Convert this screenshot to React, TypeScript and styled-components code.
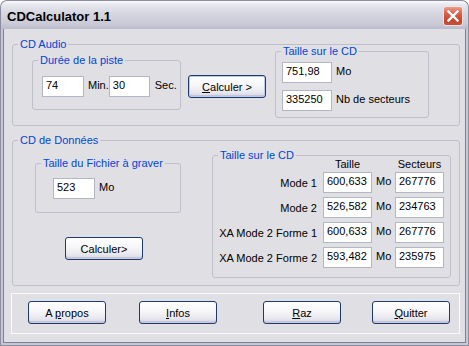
import React from 'react';
import styled, { createGlobalStyle } from 'styled-components';

const GlobalStyle = createGlobalStyle`
  html, body {
    margin: 0;
    padding: 0;
    background: #ffffff;
  }
  body {
    font-family: "Liberation Sans", Arial, sans-serif;
    font-size: 11px;
    color: #000;
  }
`;

const Window = styled.div`
  width: 469px;
  height: 346px;
  display: flex;
  flex-direction: column;
`;

const TitleBar = styled.div`
  flex: none;
  height: 29px;
  box-sizing: border-box;
  display: flex;
  align-items: center;
  justify-content: space-between;
  padding: 2px 5px 0 6px;
  border: 1px solid #8c8ca0;
  border-bottom: none;
  border-radius: 7px 7px 0 0;
  background: linear-gradient(
    180deg,
    #fbfbfd 0%,
    #e6e6ee 14%,
    #d6d6e1 45%,
    #cbcbd8 80%,
    #bbbbcb 100%
  );
`;

const Title = styled.span`
  font-family: "Liberation Sans", Arial, sans-serif;
  font-weight: bold;
  font-size: 13px;
  line-height: 15px;
  color: #000;
`;

const CloseBtn = styled.div`
  width: 20px;
  height: 20px;
  box-sizing: border-box;
  border: 1px solid #f4e4e0;
  border-radius: 3px;
  background: linear-gradient(180deg, #e9a08e 0%, #d9604a 35%, #c9432d 75%, #c5503d 100%);
  display: flex;
  align-items: center;
  justify-content: center;
`;

const Frame = styled.div`
  flex: 1;
  display: flex;
  border: 1px solid #8d8da0;
  border-top: none;
  padding: 0 2px 2px;
  background: #c7c7d5;
`;

const Panel = styled.div`
  flex: 1;
  display: flex;
  flex-direction: column;
  align-items: flex-start;
  background: #e0dfe3;
  border: 1px solid #7e7e94;
  border-top: none;
  padding: 9px 0 0 8px;
`;

const Group = styled.fieldset<{ $w: number; $h: number; $m?: string }>`
  margin: ${(p) => p.$m ?? '0'};
  padding: 0;
  min-width: 0;
  box-sizing: border-box;
  width: ${(p) => p.$w}px;
  height: ${(p) => p.$h}px;
  border: 1px solid #bfbfc9;
  border-radius: 3px;
  flex: none;
`;

const Legend = styled.legend`
  margin-left: 5px;
  padding: 0 2px;
  color: #0046d5;
  font-size: 11px;
  line-height: 13px;
`;

const Row = styled.div`
  display: flex;
  align-items: flex-start;
`;

const Column = styled.div<{ $ml: number }>`
  display: flex;
  flex-direction: column;
  align-items: flex-start;
  margin-left: ${(p) => p.$ml}px;
`;

const Inner = styled.div<{ $pad: string }>`
  padding: ${(p) => p.$pad};
  display: flex;
  flex-direction: column;
  gap: 7px;
`;

const InputLine = styled.div`
  display: flex;
  align-items: center;
`;

const Field = styled.input.attrs(() => ({
  type: 'text',
  readOnly: true,
}))<{ $w: number }>`
  width: ${(p) => p.$w}px;
  height: 21px;
  box-sizing: border-box;
  margin: 0;
  padding: 0 0 3px 3px;
  border: 1px solid #b3b6c4;
  background: #fff;
  color: #000;
  font-family: "Liberation Sans", Arial, sans-serif;
  font-size: 11px;
  outline: none;
`;

const Unit = styled.span<{ $ml?: number }>`
  margin-left: ${(p) => p.$ml ?? 4}px;
  padding-bottom: 2px;
  line-height: 13px;
  white-space: nowrap;
`;

const Button = styled.button<{ $ml?: number; $mt?: number; $default?: boolean }>`
  flex: none;
  width: 78px;
  height: 23px;
  margin: ${(p) => p.$mt ?? 0}px 0 0 ${(p) => p.$ml ?? 0}px;
  padding: 0;
  border: 1px solid #1d3b6e;
  border-radius: 3px;
  background: linear-gradient(180deg, #ffffff 0%, #f6f6f9 45%, #e6e6ee 80%, #d2d1df 100%);
  box-shadow: ${(p) =>
    p.$default
      ? 'inset 0 0 0 1px #b8cbec, inset 0 -2px 0 #c6c5d8'
      : 'inset 0 1px 0 #ffffff, inset 0 -2px 0 #c9c8d9'};
  font-family: "Liberation Sans", Arial, sans-serif;
  font-size: 11px;
  color: #000;
  cursor: default;
`;

const Table = styled.div`
  margin-top: -4px;
  display: flex;
  flex-direction: column;
`;

const TableHead = styled.div`
  display: grid;
  grid-template-columns: 110px 49px 23px 49px;
  height: 13px;
  line-height: 13px;
  margin-bottom: 1px;
`;

const TableBody = styled.div`
  display: flex;
  flex-direction: column;
  gap: 4px;
`;

const TableRow = styled.div`
  display: grid;
  grid-template-columns: 110px 49px 23px 49px;
  align-items: center;
`;

const HeadCell = styled.span<{ $col: number }>`
  grid-column: ${(p) => p.$col};
  text-align: center;
`;

const RowLabel = styled.span`
  text-align: right;
  padding-right: 6px;
  white-space: nowrap;
`;

const ButtonBar = styled.div`
  margin: 7px 0 0 -1px;
  width: 449px;
  height: 41px;
  box-sizing: border-box;
  border: 1px solid #fbfbfd;
  display: flex;
  align-items: flex-start;
  padding: 7px 0 0 16px;
`;

const modes = [
  { label: 'Mode 1', size: '600,633', sectors: '267776' },
  { label: 'Mode 2', size: '526,582', sectors: '234763' },
  { label: 'XA Mode 2 Forme 1', size: '600,633', sectors: '267776' },
  { label: 'XA Mode 2 Forme 2', size: '593,482', sectors: '235975' },
];

const App: React.FC = () => {
  return (
    <>
      <GlobalStyle />
      <Window>
        <TitleBar>
          <Title>CDCalculator 1.1</Title>
          <CloseBtn>
            <svg width="12" height="12" viewBox="0 0 12 12">
              <path d="M1.5 1.5 L10.5 10.5 M10.5 1.5 L1.5 10.5" stroke="#fff" strokeWidth="2.4" strokeLinecap="square" />
            </svg>
          </CloseBtn>
        </TitleBar>
        <Frame>
          <Panel>
            <Group $w={448} $h={88}>
              <Legend>CD Audio</Legend>
              <Row>
                <Group $w={149} $h={56} $m="3px 0 0 19px">
                  <Legend>Durée de la piste</Legend>
                  <Inner $pad="9px 0 0 9px">
                    <InputLine>
                      <Field $w={42} defaultValue="74" />
                      <Unit>Min.</Unit>
                      <Field $w={41} defaultValue="30" />
                      <Unit $ml={5}>Sec.</Unit>
                    </InputLine>
                  </Inner>
                </Group>
                <Button $ml={7} $mt={24} $default>
                  <u>C</u>alculer &gt;
                </Button>
                <Group $w={154} $h={73} $m="-6px 0 0 9px">
                  <Legend>Taille sur le CD</Legend>
                  <Inner $pad="4px 0 0 6px">
                    <InputLine>
                      <Field $w={50} defaultValue="751,98" />
                      <Unit>Mo</Unit>
                    </InputLine>
                    <InputLine>
                      <Field $w={50} defaultValue="335250" />
                      <Unit>Nb de secteurs</Unit>
                    </InputLine>
                  </Inner>
                </Group>
              </Row>
            </Group>

            <Group $w={448} $h={152} $m="8px 0 0 0">
              <Legend>CD de Données</Legend>
              <Row>
                <Column $ml={22}>
                  <Group $w={146} $h={56} $m="10px 0 0 0">
                    <Legend>Taille du Fichier à graver</Legend>
                    <Inner $pad="8px 0 0 17px">
                      <InputLine>
                        <Field $w={42} defaultValue="523" />
                        <Unit>Mo</Unit>
                      </InputLine>
                    </Inner>
                  </Group>
                  <Button $ml={30} $mt={24}>
                    Calculer&gt;
                  </Button>
                </Column>
                <Group $w={239} $h={129} $m="2px 0 0 31px">
                  <Legend>Taille sur le CD</Legend>
                  <Table>
                    <TableHead>
                      <HeadCell $col={2}>Taille</HeadCell>
                      <HeadCell $col={4}>Secteurs</HeadCell>
                    </TableHead>
                    <TableBody>
                      {modes.map((m) => (
                        <TableRow key={m.label}>
                          <RowLabel>{m.label}</RowLabel>
                          <Field $w={49} defaultValue={m.size} />
                          <Unit>Mo</Unit>
                          <Field $w={49} defaultValue={m.sectors} />
                        </TableRow>
                      ))}
                    </TableBody>
                  </Table>
                </Group>
              </Row>
            </Group>

            <ButtonBar>
              <Button>
                A <u>p</u>ropos
              </Button>
              <Button $ml={33}>
                <u>I</u>nfos
              </Button>
              <Button $ml={46}>
                <u>R</u>az
              </Button>
              <Button $ml={31}>
                <u>Q</u>uitter
              </Button>
            </ButtonBar>
          </Panel>
        </Frame>
      </Window>
    </>
  );
};

export default App;
